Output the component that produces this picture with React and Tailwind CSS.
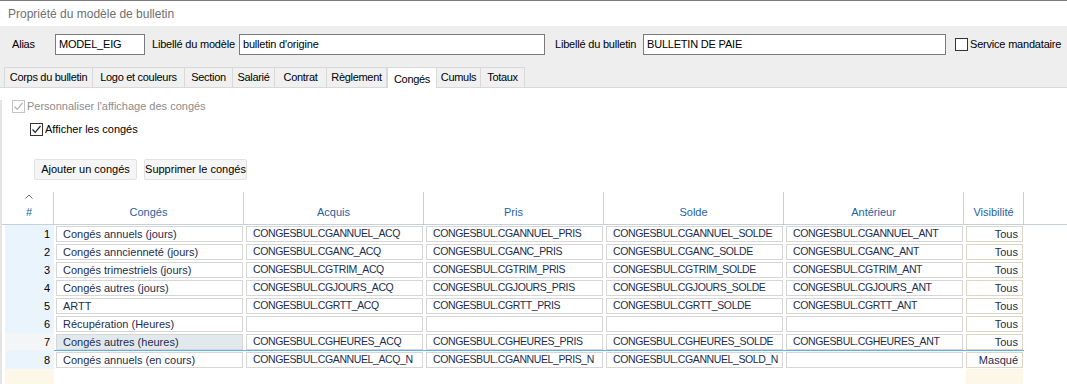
import React from 'react';

// Données du tableau des congés
const rows = [
  { n: 1, label: 'Congés annuels (jours)', acq: 'CONGESBUL.CGANNUEL_ACQ', pris: 'CONGESBUL.CGANNUEL_PRIS', solde: 'CONGESBUL.CGANNUEL_SOLDE', ant: 'CONGESBUL.CGANNUEL_ANT', vis: 'Tous' },
  { n: 2, label: 'Congés anncienneté (jours)', acq: 'CONGESBUL.CGANC_ACQ', pris: 'CONGESBUL.CGANC_PRIS', solde: 'CONGESBUL.CGANC_SOLDE', ant: 'CONGESBUL.CGANC_ANT', vis: 'Tous' },
  { n: 3, label: 'Congés trimestriels (jours)', acq: 'CONGESBUL.CGTRIM_ACQ', pris: 'CONGESBUL.CGTRIM_PRIS', solde: 'CONGESBUL.CGTRIM_SOLDE', ant: 'CONGESBUL.CGTRIM_ANT', vis: 'Tous' },
  { n: 4, label: 'Congés autres (jours)', acq: 'CONGESBUL.CGJOURS_ACQ', pris: 'CONGESBUL.CGJOURS_PRIS', solde: 'CONGESBUL.CGJOURS_SOLDE', ant: 'CONGESBUL.CGJOURS_ANT', vis: 'Tous' },
  { n: 5, label: 'ARTT', acq: 'CONGESBUL.CGRTT_ACQ', pris: 'CONGESBUL.CGRTT_PRIS', solde: 'CONGESBUL.CGRTT_SOLDE', ant: 'CONGESBUL.CGRTT_ANT', vis: 'Tous' },
  { n: 6, label: 'Récupération (Heures)', acq: '', pris: '', solde: '', ant: '', vis: 'Tous' },
  { n: 7, label: 'Congés autres (heures)', acq: 'CONGESBUL.CGHEURES_ACQ', pris: 'CONGESBUL.CGHEURES_PRIS', solde: 'CONGESBUL.CGHEURES_SOLDE', ant: 'CONGESBUL.CGHEURES_ANT', vis: 'Tous' },
  { n: 8, label: 'Congés annuels (en cours)', acq: 'CONGESBUL.CGANNUEL_ACQ_N', pris: 'CONGESBUL.CGANNUEL_PRIS_N', solde: 'CONGESBUL.CGANNUEL_SOLD_N', ant: '', vis: 'Masqué' },
];

// onglets avec leur largeur mesurée
const tabs = [
  { t: 'Corps du bulletin', w: 'w-[89px]' },
  { t: 'Logo et couleurs', w: 'w-[92px]' },
  { t: 'Section', w: 'w-[48px]' },
  { t: 'Salarié', w: 'w-[42px]' },
  { t: 'Contrat', w: 'w-[52px]' },
  { t: 'Règlement', w: 'w-[60px]' },
  { t: 'Congés', w: 'w-[50px]' },
  { t: 'Cumuls', w: 'w-[44px]' },
  { t: 'Totaux', w: 'w-[44px]' },
];

const Check = ({ color }) => (
  <svg width="11" height="11" viewBox="0 0 11 11" fill="none">
    <path d="M1.5 5.5 L4.2 8.3 L9.5 2" stroke={color} strokeWidth="1.2" />
  </svg>
);

const CodeCell = ({ text }) => (
  <div className="w-[180px] h-[18px] py-[1px] pl-[2px] pr-[1px] flex">
    <div className="flex-1 border border-[#d6d6d6] bg-white flex items-center pl-[6px] text-[10.5px] text-[#1c2d4d] tracking-[-0.4px] whitespace-nowrap overflow-hidden">
      {text}
    </div>
  </div>
);

const App = () => {
  return (
    <div className="w-[1067px] h-[384px] overflow-hidden bg-white font-['Liberation_Sans',sans-serif] text-[11px] text-black">
      {/* Barre de titre */}
      <div className="h-[26px] border-t border-[#7a7a7a] flex items-center pl-[8px] text-[12px] text-[#6f6f6f]">
        Propriété du modèle de bulletin
      </div>

      {/* Entête */}
      <div className="bg-[#eeeeee] pt-[8px]">
        <div className="flex items-center h-[21px] whitespace-nowrap tracking-[-0.2px]">
          <span className="ml-[12px] w-[43px]">Alias</span>
          <div className="w-[90px] h-[21px] border border-[#7a7a7a] bg-white pl-[3px] flex items-center">MODEL_EIG</div>
          <span className="ml-[7px] w-[87px]">Libellé du modèle</span>
          <div className="w-[306px] h-[21px] border border-[#7a7a7a] bg-white pl-[3px] flex items-center">bulletin d'origine</div>
          <span className="ml-[10px] w-[88px]">Libellé du bulletin</span>
          <div className="w-[303px] h-[21px] border border-[#7a7a7a] bg-white pl-[3px] flex items-center">BULLETIN DE PAIE</div>
          <div className="ml-[9px] w-[13px] h-[13px] border border-[#333] bg-white"></div>
          <span className="ml-[2px]">Service mandataire</span>
        </div>
        <div className="mt-[12px] flex items-end h-[21px] border-b border-[#d9d9d9] pl-[4px] whitespace-nowrap tracking-[-0.3px]">
          {tabs.map(({ t, w }) => (
            t === 'Congés' ? (
              <div key={t} className={`${w} h-[21px] -mb-[1px] bg-white border border-b-0 border-[#d9d9d9] flex justify-center items-start pt-[3px]`}>{t}</div>
            ) : (
              <div key={t} className={`${w} h-[20px] bg-[#f0f0f0] border border-b-0 border-l-0 first:border-l border-[#d9d9d9] flex justify-center items-center`}>{t}</div>
            )
          ))}
        </div>
      </div>

      {/* Contenu de l'onglet */}
      <div className="border-l-2 border-[#e4e4e4] h-[296px]">
        <div className="flex items-center mt-[12px] ml-[10px] h-[13px] text-[#8c8c8c]">
          <div className="w-[13px] h-[13px] border border-[#c4c4c4] flex items-center justify-center"><Check color="#b0b0b0" /></div>
          <span className="ml-[2px]">Personnaliser l'affichage des congés</span>
        </div>
        <div className="flex items-center mt-[10px] ml-[28px] h-[13px]">
          <div className="w-[13px] h-[13px] border border-[#333] flex items-center justify-center"><Check color="#222" /></div>
          <span className="ml-[2px]">Afficher les congés</span>
        </div>

        <div className="flex gap-[7px] ml-[32px] mt-[23px]">
          <button className="w-[103px] h-[21px] bg-[#f5f5f5] border border-[#e2e2e2] rounded-[2px]">Ajouter un congés</button>
          <button className="w-[103px] h-[21px] bg-[#f5f5f5] border border-[#e2e2e2] rounded-[2px]">Supprimer le congés</button>
        </div>

        {/* Tableau */}
        <div className="mt-[12px]">
          <div className="flex h-[33px] border-b border-[#c6d0da] text-[#1f5fa6] pl-[3px]">
            <div className="w-[49px] flex flex-col items-center justify-end pb-[4px] border-r border-[#c6d0da]">
              <svg width="8" height="5" viewBox="0 0 8 5" fill="none" className="mb-[5px]"><path d="M0.5 4.5 L4 1 L7.5 4.5" stroke="#6a6a6a" strokeWidth="1" /></svg>
              <span>#</span>
            </div>
            {['Congés', 'Acquis', 'Pris', 'Solde', 'Antérieur'].map((h, i) => (
              <div key={h} className={`${i === 0 ? 'w-[190px]' : 'w-[180px]'} flex items-end justify-center pb-[4px] border-r border-[#c6d0da]`}>{h}</div>
            ))}
            <div className="w-[60px] flex items-end justify-center pb-[4px] border-r border-[#c6d0da]">Visibilité</div>
          </div>

          {rows.map(r => {
            const sel = r.n === 7;
            return (
              <div key={r.n} className={`flex ml-[3px] w-[1019px] h-[18px] ${sel ? 'border-b border-[#5bb2ea]' : ''}`}>
                <div className={`w-[49px] h-[18px] flex items-center justify-end pr-[4px] ${sel ? 'bg-[#f3f5f7]' : 'bg-[#eaf4fd]'}`}>{r.n}</div>
                <div className="w-[190px] h-[18px] py-[1px] pl-[2px] pr-[1px] flex">
                  <div className={`flex-1 border border-[#d6d6d6] flex items-center pl-[6px] text-[#1c2d4d] whitespace-nowrap ${sel ? 'bg-[#e1e9ed]' : 'bg-white'}`}>{r.label}</div>
                </div>
                <CodeCell text={r.acq} />
                <CodeCell text={r.pris} />
                <CodeCell text={r.solde} />
                <CodeCell text={r.ant} />
                <div className="w-[60px] h-[18px] py-[1px] pl-[2px] pr-[1px] flex">
                  <div className="flex-1 border border-[#ddd6c6] bg-white flex items-center justify-end pr-[4px] text-[#1c2d4d]">{r.vis}</div>
                </div>
              </div>
            );
          })}
          <div className="flex ml-[3px] h-[16px]">
            <div className="w-[49px] bg-[#fdf7e7]"></div>
            <div className="w-[912px]"></div>
            <div className="w-[57px] bg-[#fdf7e7]"></div>
          </div>
        </div>
      </div>
    </div>
  );
};

export default App;
